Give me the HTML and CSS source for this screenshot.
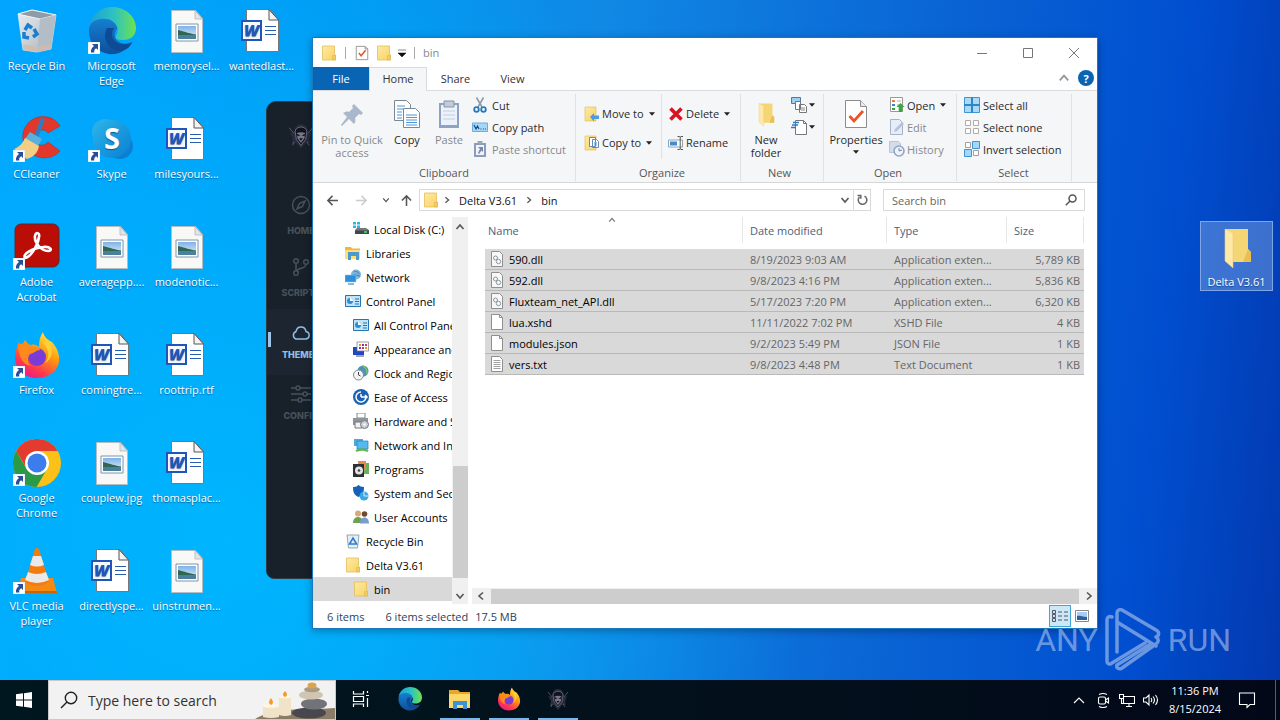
FILE: index.html
```html
<!DOCTYPE html>
<html lang="en">
<head>
<meta charset="utf-8">
<title>Desktop</title>
<link rel="stylesheet" href="styles.css">
</head>
<body>
<svg class="sprite" aria-hidden="true">
  <defs>
    <linearGradient id="gFold" x1="0" y1="0" x2="1" y2="1"><stop offset="0" stop-color="#ffeaa4"/><stop offset="1" stop-color="#f8d263"/></linearGradient>
    <linearGradient id="gEdge1" x1="0" y1="0" x2="1" y2="0"><stop offset="0" stop-color="#1aa0d8"/><stop offset=".55" stop-color="#2fc3c0"/><stop offset="1" stop-color="#6fe24b"/></linearGradient>
    <linearGradient id="gEdge2" x1="0" y1="0" x2="0" y2="1"><stop offset="0" stop-color="#1683d6"/><stop offset="1" stop-color="#0d4f9c"/></linearGradient>
    <linearGradient id="gSkype" x1="0" y1="0" x2="1" y2="1"><stop offset="0" stop-color="#2bb5ea"/><stop offset="1" stop-color="#0a7fd2"/></linearGradient>
    <linearGradient id="gFox" x1=".8" y1="0" x2=".2" y2="1"><stop offset="0" stop-color="#fff04a"/><stop offset=".4" stop-color="#ff980e"/><stop offset=".75" stop-color="#ff3750"/><stop offset="1" stop-color="#e3159a"/></linearGradient>
    <linearGradient id="gBin" x1="0" y1="0" x2="1" y2="1"><stop offset="0" stop-color="#e9eef2"/><stop offset="1" stop-color="#a9b3bc"/></linearGradient>
    <linearGradient id="gSky" x1="0" y1="0" x2="0" y2="1"><stop offset="0" stop-color="#7fb2e8"/><stop offset="1" stop-color="#e2f1f8"/></linearGradient>
  </defs>
  <symbol id="shortcut" viewBox="0 0 12 12"><path fill="#fff" stroke="#bcd" stroke-width=".5" d="M0 0h12v12H0z"/><path fill="#2a4f94" d="M4 2h6v6L8.200 6.200C6.500 7.300 6 8.500 6.300 10.500H3C2.500 7.500 4 5.500 6 4z"/></symbol>
  <symbol id="bin" viewBox="1 -1 48 48"><path d="M6 6 20 2l24 5-5 34-14 3-14-2z" fill="url(#gBin)" stroke="#e6ebef" stroke-width=".7"/><path d="M6 6 20 2l24 5-16 4z" fill="#8f9ba6" stroke="#fff" stroke-width=".8"/><path d="M28 11 25 44l14-3 5-34z" fill="#b4bdc5"/><path d="M11 36l14 3 15-3-1 5-14 3-14-2z" fill="#d8b9a4" opacity=".7"/><g fill="none" stroke="#1b7fd0" stroke-width="3.500"><path d="M13 22l3-5 4 3M22 21l3 5-4 3M17 30l-5-1 0-5"/></g></symbol>
  <symbol id="edge" viewBox="0 0 48 48"><path fill="url(#gEdge2)" d="M1 22C3 12 12 8 20 9c12 1 14 11 8 14-5 10 5 16 15 13-6 9-14 12-22 11C8 45 0 34 1 22z"/><path fill="#0f4a94" d="M19 21c-6 12 3 23 14 23 6-1 10-5 11-9-9 5-20 2-20-8 0-3 1-4 2-6z"/><path fill="url(#gEdge1)" d="M1 20C3 8 13 0 24 0c14 0 24 10 24 21 0 9-7 12-13 12-5 0-8-1-7-4 4-5 1-16-10-17C9 11 3 15 1 20z"/></symbol>
  <symbol id="pic" viewBox="0 0 48 48"><path d="M8.500 3.500h24l7 8v34h-31z" fill="#f8f8f6" stroke="#b5bcc2"/><path d="M32 3.500v8.500h7.500z" fill="#dce6ee" stroke="#b9a9a6" stroke-width=".7"/><path d="M13 17h22v17H13z" fill="#fff" stroke="#7c95ab"/><path d="M15 19h18v13H15z" fill="url(#gSky)"/><path d="M15 23c5 1 9 3 18 4.500v1.500H15z" fill="#2f6753"/><path d="M15 28h18v4H15z" fill="#4a7f9e"/></symbol>
  <symbol id="word" viewBox="0 0 48 48"><path d="M8.500 2.500h23l9 10v32h-32z" fill="#fff" stroke="#777"/><path d="M31 2.500V13h9.500z" fill="#f3f3f3" stroke="#555"/><path d="M27 19.500h11M27 23.500h11M27 27.500h11" stroke="#2a5cae"/><path d="M3 13h21v21H3z" fill="#1f56b8"/><path d="M5 15h17v17H5z" fill="#f4f8ff"/><text x="13.500" y="29" text-anchor="middle" font-family="Open Sans,sans-serif" font-size="16" font-weight="800" font-style="italic" fill="#1f56b8">W</text></symbol>
  <symbol id="cc" viewBox="0 0 48 48"><path d="M47 11C39-3 15-2 10 18c-3 20 22 34 37 18l-12-9c-7 7-13 1-12-5 1-8 9-9 12-4z" fill="#e2382b" stroke="#b92218" stroke-width=".5"/><path d="M28 3l4 1-7 19-4-2z" fill="#2c7fbf"/><path d="M17 17l12 7-4 7-13-7z" fill="#5ab0dd"/><path d="M1 34c5-2 9-6 11-11l14 8c-1 6-5 11-12 13z" fill="#f3cf86"/></symbol>
  <symbol id="skype" viewBox="0 0 48 48"><circle cx="17" cy="17" r="13" fill="#29aee6"/><circle cx="32" cy="31" r="13" fill="#0b80d3"/><circle cx="24" cy="24" r="19" fill="url(#gSkype)"/><text x="24" y="34" text-anchor="middle" font-family="Open Sans,sans-serif" font-size="29" font-weight="700" fill="#fff">S</text></symbol>
  <symbol id="acro" viewBox="0 0 48 48"><rect x="2" y="1" width="44" height="43" rx="6" fill="#b90d05" stroke="#5d2a2c"/><path d="M12 35c-3-4 8-10 18-11 8-1 10 4 5 4-7 0-14-9-13-15 1-5 5-3 4 1-1 8-8 20-14 21z" fill="none" stroke="#fff" stroke-width="2.600"/></symbol>
  <symbol id="fox" viewBox="0 0 48 48"><path d="M30 1c1 5 5 8 9 10 5 6 8 12 7 20-2 10-11 16-22 16C11 47 2 38 2 26c0-6 2-10 4-15l3 5c0-3 2-5 3-7 2 3 4 5 6 5 3-1 6 0 8 2 0-6 1-11 4-15z" fill="url(#gFox)"/><circle cx="24" cy="26" r="9" fill="#7b3bd6"/><path d="M5 14c6-3 11-1 14 2 5-1 8 1 8 3-4 0-5 3-10 4-3 4-3 9 1 12C8 33 6 24 5 14z" fill="#ff8a1c"/><path d="M30 12c6 5 7 14 2 20 8-4 10-16 2-22z" fill="#ffd43a" opacity=".8"/></symbol>
  <symbol id="chrome" viewBox="0 0 48 48"><circle cx="24" cy="24" r="24" fill="#fbc116"/><path d="M24 12h20.800a24 24 0 0 0-41.600 0L14 30z" fill="#e33b2e"/><path d="M3.200 12 13.600 30 24 36l10-6-10.400 18A24 24 0 0 1 3.200 12z" fill="#2a9a48"/><circle cx="24" cy="24" r="12" fill="#fff"/><circle cx="24" cy="24" r="9.500" fill="#3b7ded"/></symbol>
  <symbol id="vlc" viewBox="0 0 48 48"><path d="M8 31h32l4 15H4z" fill="#f58a12"/><path d="M4 44h40v2H4z" fill="#c96400"/><path d="M22 2q2-2 4 0l10 33q-12 8-24 0z" fill="#f47c0c"/><path d="M20 9h8l3 9q-7 3-14 0zM15 25q9 4 18 0l3 8q-12 6-24 0z" fill="#e9e9e9"/></symbol>
  <symbol id="bigfolder" viewBox="0 -3 48 48"><path d="M12 3h23v20l3 3v10H16z" fill="#f5d674"/><path d="M35 23l3 3v10h-8z" fill="#e9bf52"/><path d="M12 3l8 4v35l-8-7z" fill="#ffe9a8" stroke="#f0cb66" stroke-width=".6"/></symbol>
  <symbol id="folder" viewBox="0 0 16 16"><path d="M1.500 1h12v8l1 1v5h-13z" fill="url(#gFold)" stroke="#e4be5c" stroke-width=".8"/><path d="M11.500 10.500h3V15h-3z" fill="#f3cc5d" stroke="#dcb14a" stroke-width=".5"/></symbol>
  <symbol id="chk" viewBox="0 0 16 18"><path d="M1.500 1.500h10l3 3v12h-13z" fill="#fff" stroke="#8d8d8d"/><path d="M11.500 1.500v3h3" fill="none" stroke="#8d8d8d"/><path d="m4.500 9 2.500 3 5-6" fill="none" stroke="#e0592c" stroke-width="1.800"/></symbol>
  <symbol id="chkbig" viewBox="0 0 28 30"><path d="M3.500 1.500h15l6 6v21h-21z" fill="#fff" stroke="#8d8d8d"/><path d="M18.500 1.500v6h6" fill="#e6eaee" stroke="#8d8d8d"/><path d="m7.500 17 4.500 5 9-10" fill="none" stroke="#e8562a" stroke-width="2.800"/></symbol>
  <symbol id="pin" viewBox="0 0 28 28"><g fill="#a9b8cb"><path d="m16 4 9 9-2 2-2-1-4 4c1 3 0 5-1 6l-5-5-7 7-1-1 6-8-4-4c2-1 4-2 6-1l4-4-1-2z"/></g></symbol>
  <symbol id="copy" viewBox="0 0 28 30"><g fill="#fff" stroke="#7c8794"><path d="M1.500 1.500h12l4 4v16h-16z"/><path d="M10.500 9.500h12l4 4v15h-16z"/></g><path d="M4 7h8M4 10h6M4 13h5M4 16h5M4 19h5M13 16h11M13 18.500h11M13 21h11M13 23.500h11M13 26h11" stroke="#4d94dc"/></symbol>
  <symbol id="paste" viewBox="0 0 28 30"><path d="M4 4h20v25H4z" fill="#8ea2c4"/><path d="M6 6h16v20H6z" fill="#edf2fa"/><path d="M9 2h10v6H9z" fill="#c3cbd6" stroke="#8595ad"/><path d="M8 12h12M8 16h12M8 20h12" stroke="#c0cee2"/></symbol>
  <symbol id="cut" viewBox="0 0 16 16"><path d="M4.500.5 10 10M11.500.5 6 10" stroke="#8a98a8" stroke-width="1.500"/><g fill="none" stroke="#2a7ac0" stroke-width="1.800"><circle cx="4.500" cy="12.500" r="2.300"/><circle cx="11.500" cy="12.500" r="2.300"/></g></symbol>
  <symbol id="cpath" viewBox="0 0 16 16"><path d="M.5 4h15v8.500H.5z" fill="#a6d6f8" stroke="#6badde"/><path d="m2 6 2 4 1.500-3L7 10M8.500 10h1M11 10h1M13 10h1" fill="none" stroke="#164a7c" stroke-width="1.200"/></symbol>
  <symbol id="psc" viewBox="0 0 16 16"><path d="M2 2h12v14H2z" fill="#8e9cb9"/><path d="M4 4h8v10H4z" fill="#f0f3f9"/><path d="M5.500 0h5v3h-5z" fill="#9ba6b9"/><path d="M6 6h5v5L9.500 9.500 7 13 6 12l2-4z" fill="#7488ad"/></symbol>
  <symbol id="moveto" viewBox="0 0 16 16"><path d="M1 1h11v14H1z" fill="url(#gFold)" stroke="#e4c067" stroke-width=".7"/><path d="m6 11 4-4v2.500h5v3.500h-5v2.500z" fill="#4a9be8"/></symbol>
  <symbol id="copyto" viewBox="0 0 16 16"><path d="M1 1h11v14H1z" fill="url(#gFold)" stroke="#e4c067" stroke-width=".7"/><path d="M5.500 2.500h6v9h-6zM8.500 4.500h4l2 2v6h-6z" fill="#fff" stroke="#5f8bb8"/><path d="M10 8h3M10 10h3" stroke="#4d94dc"/></symbol>
  <symbol id="del" viewBox="0 0 16 16"><path d="m2.500 2.500 11 11m0-11-11 11" stroke="#d81123" stroke-width="3.600"/></symbol>
  <symbol id="ren" viewBox="0 0 16 16"><path d="M.5 5h14v7H.5z" fill="#fff" stroke="#90a4b5"/><path d="M2 6.500h7v4H2z" fill="#3d8dd0"/><path d="M9.500 1.500h2l.7.700.8-.7h2M12.200 2v12M9.500 14.500h2l.7-.7.800.7h2" fill="none" stroke="#555"/></symbol>
  <symbol id="newitem" viewBox="0 0 16 16"><path d="M.5.5h9v6h-9z" fill="#9bd0f2" stroke="#477da8"/><path d="M4.500 4.500h5v8h-5zM8.500 7.500h5l2 2v6h-7z" fill="#fff" stroke="#777"/><path d="M10 11h4M10 13h4" stroke="#888"/></symbol>
  <symbol id="easy" viewBox="0 0 16 16"><path d="M4.500 1.500h8l3 3v11h-11z" fill="#fff" stroke="#777"/><path d="M12.500 1.500v3h3" fill="none" stroke="#777"/><path d="M2 3.500h6M1 6h6M0 8.500h5" stroke="#2d7cc2" stroke-width="1.400"/></symbol>
  <symbol id="openi" viewBox="0 0 16 16"><path d="M1.500.5h12v14h-12z" fill="#fff" stroke="#999"/><path d="M3 3h3v2H3z" fill="#e67d3a"/><path d="M3 7h3v2H3z" fill="#3b86c9"/><path d="M3 11h3v2H3z" fill="#3aa34b"/><path d="M8 4h4M8 8h3" stroke="#aaa"/><path d="m11.500 6 4 4h-2.200v5h-3.600v-5H7.500z" fill="#37a93c"/></symbol>
  <symbol id="editi" viewBox="0 0 16 16"><path d="M1.500.5h9l3 3v12h-12z" fill="#e7edf7" stroke="#a5b4cc"/><path d="m5 13 1-3 7-7 2 2-7 7z" fill="#b6c3da"/></symbol>
  <symbol id="hist" viewBox="0 0 16 16"><path d="M.5.5h9l2 2v9H.5z" fill="#d4dcec" stroke="#b9c5da"/><circle cx="10" cy="10" r="5" fill="#eef2fa" stroke="#92a3c4" stroke-width="1.600"/><path d="M10 10V7M10 10l3-1" stroke="#7286b0"/></symbol>
  <symbol id="selall" viewBox="0 0 16 16"><path d="M.5.500h15v15H.5z" fill="#a9d9f7" stroke="#3f95cf"/><path d="M8 0v16M0 8h16" stroke="#2f86c4" stroke-width="2"/></symbol>
  <symbol id="selnone" viewBox="0 0 16 16"><path d="M1.500 1.500h5v5h-5zM9.500 1.500h5v5h-5zM1.500 9.500h5v5h-5zM9.500 9.500h5v5h-5z" fill="#fff" stroke="#b3aaa6"/></symbol>
  <symbol id="selinv" viewBox="0 0 16 16"><path d="M1.500 1.500h5v5h-5zM9.500 9.500h5v5h-5z" fill="#fff" stroke="#a59d9a"/><path d="M8.500.5h7v7h-7zM.5 8.500h7v7h-7z" fill="#a3d8fa" stroke="#3f95cf"/></symbol>
  <symbol id="disk" viewBox="0 0 16 16"><path d="M0 1h3v2.500H0zM4 1h3v2.500H4zM0 4.500h3V7H0zM4 4.500h3V7H4z" fill="#2cb6e6"/><path d="m2 9 2-2h9l3 2v4H2z" fill="#71787e"/><path d="M2 9.500h14V13H2z" fill="#3f464c"/><path d="M11 11h3" stroke="#5de06a" stroke-width="1.500"/></symbol>
  <symbol id="lib" viewBox="0 0 16 16"><path d="M0 2h6l1 1.500h8V14H0z" fill="#f2b63c"/><path d="M0 5h15v9H0z" fill="#ffdd78"/><path d="M3 15V7h11v8h-3v-4H6v4z" fill="#4a9ad0"/></symbol>
  <symbol id="net" viewBox="0 0 16 16"><circle cx="11" cy="5.500" r="5" fill="#7ab6dc"/><path d="M9 2c2 1 4 0 5 3M8 6c3-1 4 1 7 1" stroke="#3c7fb2" fill="none"/><path d="M0 6h11v7H0z" fill="#2b8fdc" stroke="#8cc9f2" stroke-width=".6"/><path d="M3 15h6" stroke="#6aa0c8" stroke-width="1.500"/></symbol>
  <symbol id="cpl" viewBox="0 0 16 16"><path d="M.5 2.500h15v11H.5z" fill="#bfe4fa" stroke="#2376b2"/><circle cx="5" cy="8" r="3" fill="#2a8fd6"/><path d="M5 8V5a3 3 0 0 1 3 3z" fill="#fff"/><path d="M10 6h4M10 8.500h4M10 11h4" stroke="#2376b2" stroke-width="1.200"/></symbol>
  <symbol id="appr" viewBox="0 0 16 16"><path d="M0 6h11v8H0z" fill="#2247c4"/><path d="M4 1h11.500v9H4z" fill="#fff" stroke="#777" stroke-width=".7"/><path d="M6 3h2v2H6zM12 6h2v2h-2z" fill="#f08a1e"/><path d="M9 3h2v2H9zM6 6h2v2H6z" fill="#6d3cb4"/><path d="M12 3h2v2h-2zM9 6h2v2H9z" fill="#d8315b"/><path d="M3 15h8" stroke="#889" stroke-width="1.500"/></symbol>
  <symbol id="clock" viewBox="0 0 16 16"><circle cx="10" cy="6" r="5.500" fill="#4b94b8"/><path d="M10 1c3 1 4 4 4 8" stroke="#83bd62" stroke-width="1.500" fill="none"/><circle cx="5.500" cy="10" r="5" fill="#f4f4f4" stroke="#808a92"/><path d="M5.500 7v3l2 1" stroke="#444" fill="none"/></symbol>
  <symbol id="ease" viewBox="0 0 16 16"><circle cx="8" cy="8" r="8" fill="#1a63b4"/><path d="M8 3a5 5 0 1 0 5 5M8 8h6m-2-2 2 2-2 2M8 8V5" fill="none" stroke="#fff" stroke-width="1.500"/></symbol>
  <symbol id="hw" viewBox="0 0 16 16"><path d="M4 0h8v5H4z" fill="#fff" stroke="#888"/><path d="M0 5h15v7H0z" fill="#8d949a"/><path d="M2 9h7v6H2z" fill="#f2f2f2" stroke="#777"/><circle cx="11.500" cy="11.500" r="4" fill="#c8ced3" stroke="#717a82"/><circle cx="11.500" cy="11.500" r="1.200" fill="#fff"/></symbol>
  <symbol id="neti" viewBox="0 0 16 16"><path d="M1 2h9v7H1z" fill="#49acdf"/><path d="M4 4h11v8H4z" fill="#54b9ee" stroke="#2281b8" stroke-width=".7"/><path d="M3 14c4-2 8-2 12 0" stroke="#62b34c" stroke-width="2.500" fill="none"/></symbol>
  <symbol id="prog" viewBox="0 0 16 16"><path d="M9 2h7v11H9z" fill="#6fae5b"/><path d="M5 0h8v9H5z" fill="#e8894e"/><path d="M0 3h11v13H0z" fill="#2c3034"/><circle cx="6" cy="9.500" r="4" fill="#e4e4e4"/><circle cx="6" cy="9.500" r="1.300" fill="#444"/></symbol>
  <symbol id="sec" viewBox="0 0 16 16"><path d="M0 2c4 0 4-1 5.500-2C7 1 8 2 11 2c0 5-1 8-5.500 10C1 10 0 7 0 2z" fill="#1561b8"/><circle cx="11" cy="11" r="4.500" fill="#38a9e4"/><path d="M11 6.500V11h4.500" fill="none" stroke="#d3effc"/></symbol>
  <symbol id="users" viewBox="0 0 16 16"><circle cx="5" cy="4.500" r="3" fill="#d9aa74"/><path d="M0 14c0-8 10-8 10 0z" fill="#6da050"/><circle cx="11.500" cy="5" r="2.800" fill="#6e4a35"/><path d="M7 14.500c0-8 9-8 9 0z" fill="#7b9ccc"/></symbol>
  <symbol id="sbin" viewBox="0 0 16 16"><path d="M2 2h12l-1.500 13h-9z" fill="#e6eef4" stroke="#93a5b3"/><path d="m8 5 3.500 6h-7z" fill="none" stroke="#2a7fd0" stroke-width="1.600"/></symbol>
  <symbol id="dll" viewBox="0 0 16 16"><path d="M2.500.5h8l3 3v12h-11z" fill="#f7f7f7" stroke="#8f8f8f"/><g fill="none" stroke="#8b98a3"><circle cx="6.500" cy="7" r="2"/><circle cx="9.500" cy="10.500" r="2.200"/></g></symbol>
  <symbol id="blank" viewBox="0 0 16 16"><path d="M2.500.5h8l3 3v12h-11z" fill="#fff" stroke="#8f8f8f"/><path d="M10.500.5v3h3" fill="none" stroke="#8f8f8f"/></symbol>
  <symbol id="txt" viewBox="0 0 16 16"><path d="M2.500.5h8l3 3v12h-11z" fill="#fff" stroke="#8f8f8f"/><path d="M4.500 4.500h7M4.500 6.500h7M4.500 8.500h7M4.500 10.500h7M4.500 12.500h7" stroke="#a0a0a0"/></symbol>
  <symbol id="caret" viewBox="0 0 7 4"><path d="M0 0h7L3.500 4z" fill="#222"/></symbol>
  <symbol id="chev" viewBox="0 0 10 10"><path d="m1.500 3 3.500 4 3.500-4" fill="none" stroke="currentColor" stroke-width="1.600"/></symbol>
  <symbol id="arrow" viewBox="0 0 14 12"><path d="M13 6H2m5-5L2 6l5 5" fill="none" stroke="currentColor" stroke-width="1.700"/></symbol>
  <symbol id="explorer" viewBox="0 0 24 24"><path d="M1 3h9l2 2h10v15H1z" fill="#e8a72a"/><path d="M1 7h21v14H1z" fill="#ffd766"/><path d="M5 22v-8h14v8h-4v-4H9v4z" fill="#3c92d6"/></symbol>
  <symbol id="hood" viewBox="0 0 24 24"><path d="M12 2c4 0 6 3 6 8l3-1-2 6 1 3-4 0-4 5-4-5-4 1 1-5-3-5 4 1c0-5 2-8 6-8z" fill="#2a2b3c"/><path d="M7 8c1-5 9-5 10 0l-1 7-4 5-4-5z" fill="#12131c" stroke="#6f7088" stroke-width=".8"/><path d="M8.500 9.500c2-1 5-1 7 0L15 14l-3 4-3-4z" fill="#77778a"/><path d="m8.500 10 3 1.500-2.500.5zM15.500 10l-3 1.500 2.500.5zM10.500 14h3L12 16z" fill="#0a0a10"/><path d="m2 5 4 5M22 5l-4 5M6 17l-1 3M17 17l2 3" fill="none" stroke="#5c5d72" stroke-width=".8"/></symbol>
</svg>

<main class="desktop">
  <div class="icons">
    <a class="ico" href="#"><svg><use href="#bin"/></svg><span>Recycle Bin</span></a>
    <a class="ico lnk" href="#"><svg><use href="#cc"/></svg><svg class="sc"><use href="#shortcut"/></svg><span>CCleaner</span></a>
    <a class="ico lnk" href="#"><svg><use href="#acro"/></svg><svg class="sc"><use href="#shortcut"/></svg><span>Adobe Acrobat</span></a>
    <a class="ico lnk" href="#"><svg><use href="#fox"/></svg><svg class="sc"><use href="#shortcut"/></svg><span>Firefox</span></a>
    <a class="ico lnk" href="#"><svg><use href="#chrome"/></svg><svg class="sc"><use href="#shortcut"/></svg><span>Google Chrome</span></a>
    <a class="ico lnk" href="#"><svg><use href="#vlc"/></svg><svg class="sc"><use href="#shortcut"/></svg><span>VLC media player</span></a>
    <a class="ico lnk" href="#"><svg><use href="#edge"/></svg><svg class="sc"><use href="#shortcut"/></svg><span>Microsoft Edge</span></a>
    <a class="ico lnk" href="#"><svg><use href="#skype"/></svg><svg class="sc"><use href="#shortcut"/></svg><span>Skype</span></a>
    <a class="ico" href="#"><svg><use href="#pic"/></svg><span>averagepp....</span></a>
    <a class="ico" href="#"><svg><use href="#word"/></svg><span>comingtre...</span></a>
    <a class="ico" href="#"><svg><use href="#pic"/></svg><span>couplew.jpg</span></a>
    <a class="ico" href="#"><svg><use href="#word"/></svg><span>directlyspe...</span></a>
    <a class="ico" href="#"><svg><use href="#pic"/></svg><span>memorysel...</span></a>
    <a class="ico" href="#"><svg><use href="#word"/></svg><span>milesyours...</span></a>
    <a class="ico" href="#"><svg><use href="#pic"/></svg><span>modenotic...</span></a>
    <a class="ico" href="#"><svg><use href="#word"/></svg><span>roottrip.rtf</span></a>
    <a class="ico" href="#"><svg><use href="#word"/></svg><span>thomasplac...</span></a>
    <a class="ico" href="#"><svg><use href="#pic"/></svg><span>uinstrumen...</span></a>
    <a class="ico" href="#"><svg><use href="#word"/></svg><span>wantedlast...</span></a>
  </div>
  <a class="ico picked" href="#"><svg><use href="#bigfolder"/></svg><span>Delta V3.61</span></a>

  <aside class="app">
    <svg class="app-logo"><use href="#hood"/></svg>
    <nav class="app-nav">
      <a href="#"><svg viewBox="0 0 20 20"><circle cx="10" cy="10" r="8.500"/><path d="m14 6-2.500 5.500L6 14l2.500-5.500z"/></svg>HOME</a>
      <a href="#"><svg viewBox="0 0 20 20"><circle cx="5" cy="4" r="2.300"/><circle cx="5" cy="16" r="2.300"/><circle cx="15" cy="5" r="2.300"/><path d="M5 6.300v7.400M15 7.300c0 5-8 3-9 6.500"/></svg>SCRIPTS</a>
      <a class="on" href="#"><svg viewBox="0 0 20 20"><path d="M5 16a4 4 0 0 1 0-7.500c1-6 9-6 10 0a3.800 3.800 0 0 1 0 7.500z"/></svg>THEMES</a>
      <a href="#"><svg viewBox="0 0 20 20"><path d="M0 4h5m4 0h11M0 10h12m4 0h4M0 16h7m4 0h9"/><circle cx="7" cy="4" r="2"/><circle cx="14" cy="10" r="2"/><circle cx="9" cy="16" r="2"/></svg>CONFIG</a>
    </nav>
  </aside>

  <section class="win">
    <header class="title">
      <svg class="i16"><use href="#folder"/></svg><i class="vl"></i>
      <svg class="i16"><use href="#chk"/></svg><svg class="i16"><use href="#folder"/></svg>
      <svg class="qat" viewBox="0 0 8 8"><path d="M0 1h8M0 4h8L4 8z" fill="#111" stroke="#111" stroke-width=".5"/></svg><i class="vl"></i>
      <span class="name">bin</span>
      <button aria-label="Minimize"><svg viewBox="0 0 10 10"><path d="M0 5.500h10"/></svg></button>
      <button aria-label="Maximize"><svg viewBox="0 0 10 10"><path d="M.5.5h9v9h-9z"/></svg></button>
      <button aria-label="Close"><svg viewBox="0 0 10 10"><path d="m0 0 10 10M10 0 0 10"/></svg></button>
    </header>
    <div class="tabs">
      <button class="file">File</button><button class="cur">Home</button><button>Share</button><button>View</button>
      <svg class="fold up"><use href="#chev"/></svg>
      <button class="help" aria-label="Help">?</button>
    </div>
    <div class="ribbon">
      <div class="grp clip"><div class="body">
        <button class="big dis pinb"><svg><use href="#pin"/></svg>Pin to Quick access</button>
        <button class="big"><svg><use href="#copy"/></svg>Copy</button>
        <button class="big dis"><svg><use href="#paste"/></svg>Paste</button>
        <div class="col last"><button><svg class="i16"><use href="#cut"/></svg>Cut</button><button><svg class="i16"><use href="#cpath"/></svg>Copy path</button><button class="dis"><svg class="i16"><use href="#psc"/></svg>Paste shortcut</button></div>
      </div><p>Clipboard</p></div>
      <div class="grp org"><div class="body">
        <div class="col two"><button><svg class="i16"><use href="#moveto"/></svg>Move to<svg class="car"><use href="#caret"/></svg></button><button><svg class="i16"><use href="#copyto"/></svg>Copy to<svg class="car"><use href="#caret"/></svg></button></div>
        <div class="col two line"><button><svg class="i16"><use href="#del"/></svg>Delete<svg class="car"><use href="#caret"/></svg></button><button><svg class="i16"><use href="#ren"/></svg>Rename</button></div>
      </div><p>Organize</p></div>
      <div class="grp new"><div class="body">
        <button class="big"><svg><use href="#bigfolder"/></svg>New folder</button>
        <div class="col"><button aria-label="New item"><svg class="i16"><use href="#newitem"/></svg><svg class="car"><use href="#caret"/></svg></button><button aria-label="Easy access"><svg class="i16"><use href="#easy"/></svg><svg class="car"><use href="#caret"/></svg></button></div>
      </div><p>New</p></div>
      <div class="grp open"><div class="body">
        <button class="big prop"><svg><use href="#chkbig"/></svg>Properties<svg class="car"><use href="#caret"/></svg></button>
        <div class="col"><button><svg class="i16"><use href="#openi"/></svg>Open<svg class="car"><use href="#caret"/></svg></button><button class="dis"><svg class="i16"><use href="#editi"/></svg>Edit</button><button class="dis"><svg class="i16"><use href="#hist"/></svg>History</button></div>
      </div><p>Open</p></div>
      <div class="grp sel"><div class="body">
        <div class="col"><button><svg class="i16"><use href="#selall"/></svg>Select all</button><button><svg class="i16"><use href="#selnone"/></svg>Select none</button><button><svg class="i16"><use href="#selinv"/></svg>Invert selection</button></div>
      </div><p>Select</p></div>
    </div>
    <div class="addr">
      <button aria-label="Back"><svg class="arr"><use href="#arrow"/></svg></button>
      <button class="off" aria-label="Forward"><svg class="arr flip"><use href="#arrow"/></svg></button>
      <button class="slim" aria-label="Recent"><svg class="c8"><use href="#chev"/></svg></button>
      <button class="slim" aria-label="Up"><svg class="arr upa"><use href="#arrow"/></svg></button>
      <div class="path"><svg class="i16"><use href="#folder"/></svg><svg class="c8 right"><use href="#chev"/></svg><button>Delta V3.61</button><svg class="c8 right"><use href="#chev"/></svg><button>bin</button>
        <button class="drop" aria-label="Previous locations"><svg class="c10"><use href="#chev"/></svg></button>
        <button class="ref" aria-label="Refresh"><svg viewBox="0 0 12 12"><path d="M8.500 2.200A4.300 4.300 0 1 1 3.500 3M1.500 1.500h3.300v3.300" fill="none" stroke="#666" stroke-width="1.500"/></svg></button>
      </div>
      <label class="find"><input type="search" placeholder="Search bin" aria-label="Search bin"><svg viewBox="0 0 12 12"><circle cx="7.500" cy="4.500" r="3.500"/><path d="M5 7 .8 11.200"/></svg></label>
    </div>
    <div class="main">
      <nav class="tree">
        <a class="sub" href="#"><svg class="i16"><use href="#disk"/></svg>Local Disk (C:)</a>
        <a href="#"><svg class="i16"><use href="#lib"/></svg>Libraries</a>
        <a href="#"><svg class="i16"><use href="#net"/></svg>Network</a>
        <a href="#"><svg class="i16"><use href="#cpl"/></svg>Control Panel</a>
        <a class="sub" href="#"><svg class="i16"><use href="#cpl"/></svg>All Control Panel Items</a>
        <a class="sub" href="#"><svg class="i16"><use href="#appr"/></svg>Appearance and Personalization</a>
        <a class="sub" href="#"><svg class="i16"><use href="#clock"/></svg>Clock and Region</a>
        <a class="sub" href="#"><svg class="i16"><use href="#ease"/></svg>Ease of Access</a>
        <a class="sub" href="#"><svg class="i16"><use href="#hw"/></svg>Hardware and Sound</a>
        <a class="sub" href="#"><svg class="i16"><use href="#neti"/></svg>Network and Internet</a>
        <a class="sub" href="#"><svg class="i16"><use href="#prog"/></svg>Programs</a>
        <a class="sub" href="#"><svg class="i16"><use href="#sec"/></svg>System and Security</a>
        <a class="sub" href="#"><svg class="i16"><use href="#users"/></svg>User Accounts</a>
        <a href="#"><svg class="i16"><use href="#sbin"/></svg>Recycle Bin</a>
        <a href="#"><svg class="i16"><use href="#folder"/></svg>Delta V3.61</a>
        <a class="sub here" href="#"><svg class="i16"><use href="#folder"/></svg>bin</a>
      </nav>
      <div class="vbar"><svg class="c10 up"><use href="#chev"/></svg><i></i><svg class="c10"><use href="#chev"/></svg></div>
      <div class="pane">
        <svg class="sort up"><use href="#chev"/></svg>
        <table>
          <colgroup><col><col class="w-date"><col class="w-type"><col class="w-size"></colgroup>
          <thead><tr><th>Name</th><th>Date modified</th><th>Type</th><th>Size</th></tr></thead>
          <tbody>
            <tr><td><svg class="i16"><use href="#dll"/></svg>590.dll</td><td>8/19/2023 9:03 AM</td><td>Application exten...</td><td>5,789 KB</td></tr>
            <tr><td><svg class="i16"><use href="#dll"/></svg>592.dll</td><td>9/8/2023 4:16 PM</td><td>Application exten...</td><td>5,836 KB</td></tr>
            <tr><td><svg class="i16"><use href="#dll"/></svg>Fluxteam_net_API.dll</td><td>5/17/2023 7:20 PM</td><td>Application exten...</td><td>6,320 KB</td></tr>
            <tr><td><svg class="i16"><use href="#blank"/></svg>lua.xshd</td><td>11/11/2022 7:02 PM</td><td>XSHD File</td><td>4 KB</td></tr>
            <tr><td><svg class="i16"><use href="#blank"/></svg>modules.json</td><td>9/2/2023 5:49 PM</td><td>JSON File</td><td>1 KB</td></tr>
            <tr><td><svg class="i16"><use href="#txt"/></svg>vers.txt</td><td>9/8/2023 4:48 PM</td><td>Text Document</td><td>1 KB</td></tr>
          </tbody>
        </table>
        <div class="hbar"><svg class="c10 left"><use href="#chev"/></svg><i></i><svg class="c10 right"><use href="#chev"/></svg></div>
      </div>
    </div>
    <footer class="status"><span class="n">6 items</span><span>6 items selected</span><span class="mb">17.5 MB</span>
      <button class="vw act" aria-label="Details view"><svg viewBox="0 0 18 14"><path d="M1.500 1.500h3v3h-3zM1.500 5.500h3v3h-3zM1.500 9.500h3v3h-3zM7 3h4M7 7h4M7 11h4M13 3h4M13 7h4M13 11h4" fill="none" stroke="#556"/></svg></button>
      <button class="vw" aria-label="Large icons view"><svg viewBox="0 0 18 14"><path d="M2.500 1.500h13v11h-13z" fill="#fff" stroke="#888"/><path d="M4 3h10v8H4z" fill="#a8cdf0"/><path d="M4 7c4-1 6 1 10 1v3H4z" fill="#2d609e"/></svg></button>
    </footer>
  </section>

  <div class="mark"><span>ANY</span>
    <svg viewBox="0 0 56 64"><path d="M7 9C4 8 2 9 2 12v41c0 3 3 4 5 2l33-20M12 44V5c0-3 3-4 5-3l34 20c4 2 3 6 0 7M12 14l39 24M51 29c3 2 3 5 0 7L17 60c-3 2-6 0-5-3L44 37"/></svg>
    <span>RUN</span></div>
</main>

<footer class="bar">
  <button class="start" aria-label="Start"><svg viewBox="0 0 16 16"><path fill="#fff" d="m0 2.300 7-1v6.200H0zM8 1.200 16 0v7.500H8zM0 8.500h7v6.200l-7-1zM8 8.500h8V16l-8-1.200z"/></svg></button>
  <label class="search"><svg viewBox="0 0 18 18"><circle cx="11" cy="7" r="5.700"/><path d="M7 11 1 17"/></svg><input type="text" placeholder="Type here to search" aria-label="Type here to search">
    <svg class="art" viewBox="0 0 80 38"><path d="M0 38c8-5 30-11 48-9l32-2v11z" fill="#8a7d68"/><path d="M8 25h16v11q-8 2-16 0zM24 16h12v18q-6 2-12 0z" fill="#f1e3c8"/><ellipse cx="16" cy="25" rx="8" ry="1.800" fill="#fdf6e2"/><ellipse cx="30" cy="16" rx="6" ry="1.500" fill="#fdf6e2"/><path d="M16 17q4 5 0 7-4-2 0-7zM30 10q4 4 0 6-4-2 0-6z" fill="#f49a25"/><ellipse cx="54" cy="32" rx="17" ry="5.500" fill="#47474d"/><ellipse cx="59" cy="23" rx="13" ry="5.500" fill="#727279"/><ellipse cx="56" cy="14" rx="12" ry="4.500" fill="#cfc5b2"/><ellipse cx="57" cy="8.500" rx="8" ry="2.800" fill="#a99a80"/><ellipse cx="57" cy="4.500" rx="4.500" ry="3" fill="#dba44d"/></svg></label>
  <button class="tb" aria-label="Task view"><svg class="tv" viewBox="0 0 18 18"><path d="M1.500 1v3h10V1M1.500 17v-3h10v3M1.500 6.500h10v5h-10zM15.500 1v2M15.500 8v9M14 5.500h3" fill="none" stroke="#fff" stroke-width="1.200"/></svg></button>
  <button class="tb" aria-label="Edge"><svg><use href="#edge"/></svg></button>
  <button class="tb run" aria-label="File Explorer"><svg><use href="#explorer"/></svg></button>
  <button class="tb run" aria-label="Firefox"><svg><use href="#fox"/></svg></button>
  <button class="tb run" aria-label="Delta"><svg><use href="#hood"/></svg></button>
  <div class="tray">
    <svg viewBox="0 0 16 16"><path d="m3 11 5-5 5 5"/></svg>
    <svg viewBox="0 0 16 16"><rect x="3.500" y="5" width="7" height="7" rx="1.500"/><path d="m10.500 8 3-2v5l-3-2M4 2.500c3-1.500 5-1.500 8 0M4 14.500c3 1.500 5 1.500 8 0"/></svg>
    <svg viewBox="0 0 16 16"><path d="M4.500 4.500h11v7h-11zM10 11.500v3M7 14.500h6M.5 2.500h4v4h-4zM2.500 6.500v5h2"/></svg>
    <svg viewBox="0 0 16 16"><path d="M.5 6v4H3l3 3V3L3 6zM8 6q1.500 2 0 4M10 4.500q3 3.500 0 7M12.500 3q4 5 0 10"/></svg>
    <div class="time"><span>11:36 PM</span><span>8/15/2024</span></div>
    <svg class="note" viewBox="0 0 18 18"><path d="M1.500 2h15v11.500H12l-3 3v-3H1.500z"/></svg>
    <i></i>
  </div>
</footer>
</body>
</html>
```
FILE: styles.css
```css
* { box-sizing: border-box; }
body {
  margin: 0; min-height: 100vh; display: flex; flex-direction: column; overflow: hidden;
  font: 11px/13px "Open Sans", "Noto Sans", sans-serif; color: #000;
  background:
    radial-gradient(ellipse 45% 90% at 18% 75%, rgba(0, 184, 255, .9), rgba(0, 184, 255, 0)),
    linear-gradient(96deg, #00a4ff 0%, #009af4 26%, #1088e4 45%, #0a64d4 70%, #004fd0 88%, #0338ae 100%);
}
button { font: inherit; color: inherit; background: none; border: 0; padding: 0; margin: 0; white-space: nowrap; }
a { color: inherit; text-decoration: none; }
input { font: inherit; border: 0; background: none; padding: 0; min-width: 0; outline: 0; }
svg { flex: none; display: block; }
.sprite { position: absolute; width: 0; height: 0; }
.i16 { width: 16px; height: 16px; }
.c8 { width: 8px; height: 8px; color: #555; }
.c10 { width: 10px; height: 10px; color: #555; }
.up { transform: rotate(180deg); }
.right { transform: rotate(-90deg); }
.left { transform: rotate(90deg); }
.car { width: 6px; height: 4px; }

.desktop { flex: 1; position: relative; }
.icons { display: grid; grid-template-rows: repeat(6, 108px); grid-auto-flow: column; grid-auto-columns: 75px; }
.ico { position: relative; display: flex; flex-direction: column; align-items: center; gap: 3px; padding-top: 7px; width: 73px; text-align: center; line-height: 15px; color: #fff; text-shadow: 0 1px 1px rgba(0, 40, 90, .6); }
.ico svg { width: 48px; height: 48px; }
.ico span { width: min-content; min-width: 60px; }
.ico .sc { position: absolute; left: 13px; top: 42px; width: 12px; height: 12px; }
.picked { position: absolute; right: 7px; top: 221px; padding: 1px 0; background: rgba(120, 160, 225, .5); border: 1px solid #7ea6e6; }
.picked span { width: auto; white-space: nowrap; }

.app { position: absolute; left: 266px; top: 101px; bottom: 101px; width: 70px; background: #18202a; border-radius: 10px 0 0 8px; border: 1px solid #303a45; overflow: hidden; color: #46515b; font: 800 9px/12px Inter, sans-serif; }
.app-logo { width: 28px; height: 28px; margin: 20px 0 0 20px; }
.app-nav { display: flex; flex-direction: column; margin-top: 35px; }
.app-nav a { height: 62px; display: flex; flex-direction: column; align-items: center; justify-content: center; gap: 10px; }
.app-nav .on { position: relative; height: 66px; gap: 6px; color: #8fc0ea; background: #1d2630; }
.app-nav .on::before { content: ""; position: absolute; left: 1px; top: 23px; width: 3px; height: 15px; background: #9fc6e8; }
.app-nav .on + a { height: 56px; gap: 6px; }
.app-nav svg { width: 20px; height: 20px; fill: none; stroke: currentColor; stroke-width: 1.500; }

.win { position: absolute; left: 312px; right: 182px; top: 37px; bottom: 51px; background: #fff; border: 1px solid #1a78c0; display: flex; flex-direction: column; box-shadow: 0 2px 8px rgba(0, 0, 0, .3); }
.title { height: 29px; display: flex; align-items: center; padding-left: 8px; gap: 6px; color: #888; }
.vl { width: 1px; height: 12px; background: #aaa; margin: 0 2px; }
.title .qat { width: 8px; height: 8px; }
.name { flex: 1; }
.title button { width: 46px; height: 26px; display: grid; place-items: center; margin-left: -6px; }
.title button svg { width: 10px; height: 10px; fill: none; stroke: #777; }
.tabs { height: 24px; display: flex; align-items: stretch; border-bottom: 1px solid #dadbdc; color: #333; }
.tabs button { width: 57px; }
.tabs .file { width: 56px; background: #0a64b4; color: #fff; }
.tabs .cur { width: 58px; background: #f5f6f7; border: 1px solid #dadbdc; border-width: 1px 1px 0; margin-bottom: -1px; padding-bottom: 2px; }
.fold { width: 12px; height: 12px; color: #999; margin: 5px 8px 0 auto; }
.tabs .help { width: 16px; height: 16px; margin: 3px 3px 0 0; border-radius: 50%; background: #0a64b4; color: #fff; font-weight: 700; }
.ribbon { height: 92px; display: flex; background: #f5f6f7; border-bottom: 1px solid #d5d6d7; color: #2b2b2b; padding: 3px 0 1px; }
.grp { display: flex; flex-direction: column; border-right: 1px solid #e0e1e2; }
.grp p { margin: 0; padding-bottom: 1px; text-align: center; color: #555; line-height: 15px; }
.body { flex: 1; display: flex; }
.clip { width: 263px; padding-left: 5px; }
.org { width: 165px; padding-left: 8px; }
.new { width: 83px; padding-left: 3px; }
.open { width: 133px; padding-left: 4px; }
.sel { width: 115px; padding-left: 7px; }
.clip p { padding-right: 5px; }
.open p, .sel p, .new p { padding-right: 8px; }
.big { display: flex; flex-direction: column; align-items: center; width: 42px; padding-top: 5px; white-space: normal; }
.big svg { width: 28px; height: 30px; margin-bottom: 4px; }
.big .car { width: 6px; height: 4px; margin: 4px 0 0; }
.pinb { width: 68px; }
.new .big { width: 44px; margin-right: 3px; }
.prop { width: 56px; margin-right: 5px; }
.dis { color: #85898f; }
.col button { height: 22px; display: flex; align-items: center; gap: 4px; }
.sel .col button { gap: 3px; }
.col.last { margin-left: 2px; }
.col.two { padding-top: 5px; width: 77px; }
.col.two button { height: 29px; gap: 2px; }
.col.two .car, .open .col .car { margin-left: 3px; }
.col.line { border-left: 1px solid #e0e1e2; padding-left: 6px; width: auto; margin-bottom: 6px; }
.new .col button, .open .col button { gap: 2px; }

.addr { height: 34px; display: flex; align-items: center; padding: 0 12px 0 5px; color: #555; }
.addr > button { width: 29px; display: grid; place-items: center; }
.addr > .slim { width: 20px; }
.arr { width: 13px; height: 11px; }
.flip { transform: rotate(180deg); }
.upa { transform: rotate(90deg); }
.off { color: #ccc; }
.path { flex: 1; height: 22px; margin-left: 3px; border: 1px solid #d9d9d9; display: flex; align-items: center; gap: 8px; padding-left: 3px; color: #111; }
.path .i16 { margin-right: -4px; }
.path .drop { margin-left: auto; }
.path .drop, .path .ref { display: grid; place-items: center; align-self: stretch; }
.path .drop { margin-right: -8px; width: 16px; }
.path .ref { width: 17px; border-left: 1px solid #d9d9d9; }
.ref svg { width: 12px; height: 12px; }
.find { width: 202px; height: 22px; margin-left: 12px; border: 1px solid #d9d9d9; display: flex; align-items: center; padding: 0 7px 0 8px; }
.find input { flex: 1; }
.find input::placeholder { color: #666; }
.find svg { width: 12px; height: 12px; fill: none; stroke: #555; stroke-width: 1.500; }

.main { flex: 1; display: flex; min-height: 0; }
.tree { width: 139px; overflow: hidden; }
.tree a { display: flex; align-items: center; height: 24px; padding-left: 32px; gap: 5px; white-space: nowrap; }
.tree .sub { padding-left: 40px; }
.tree .here { background: #d9d9d9; }
.vbar { width: 16px; background: #f0f0f0; display: flex; flex-direction: column; align-items: center; padding: 5px 0 3px; }
.vbar i { width: 15px; height: 112px; margin: auto 0 13px; background: #cdcdcd; }
.pane { flex: 1; min-width: 0; display: flex; flex-direction: column; padding-left: 4px; position: relative; }
.sort { position: absolute; left: 139px; top: -1px; width: 10px; height: 8px; color: #777; }
table { margin: 0 13px; border-spacing: 0; table-layout: fixed; color: #666; }
.w-date { width: 144px; } .w-type { width: 120px; } .w-size { width: 77px; }
th { height: 26px; padding: 0 7px; text-align: left; font-weight: 400; color: #4c607a; border-right: 1px solid #e6e6e6; }
th:first-child { padding-left: 3px; }
thead::after { content: ""; display: block; height: 6px; }
td { height: 21px; padding: 0 7px; background: #d9d9d9; border-bottom: 1px solid #b9b9b9; white-space: nowrap; }
td:first-child { color: #000; display: flex; align-items: center; gap: 4px; padding-left: 4px; }
td:last-child { text-align: right; padding-right: 4px; }
.hbar { margin-top: auto; height: 16px; background: #f0f0f0; display: flex; align-items: center; padding: 0 3px 0 4px; gap: 5px; }
.hbar i { flex: 1; height: 15px; background: #cdcdcd; }
.status { height: 24px; display: flex; align-items: center; padding: 0 4px 0 14px; color: #2c3e5c; }
.status .n { margin-right: 21px; }
.status .mb { margin: 0 auto 0 7px; }
.vw { width: 22px; height: 22px; display: grid; place-items: center; }
.vw svg { width: 18px; height: 14px; }
.act { background: #cce8f6; border: 1px solid #3fa5d8; }

.mark { position: absolute; right: 49px; bottom: 8px; display: flex; align-items: center; gap: 7px; color: rgba(165, 190, 235, .65); font: 32px/60px Roboto, sans-serif; }
.mark svg { width: 56px; height: 64px; fill: none; stroke: currentColor; stroke-width: 3.500; stroke-linejoin: round; stroke-linecap: round; }

.bar { height: 40px; display: flex; background: linear-gradient(90deg, #00171f, #03101c 60%, #020818); color: #fff; position: relative; }
.start { width: 48px; display: grid; place-items: center; }
.start svg { width: 16px; height: 16px; }
.search { width: 288px; background: #f2f2f2; border: 1px solid #c9c9c9; display: flex; align-items: center; padding-left: 11px; gap: 10px; }
.search svg { width: 18px; height: 18px; fill: none; stroke: #222; stroke-width: 1.400; }
.search input { flex: 1; font-size: 14px; }
.search input::placeholder { color: #333; }
.search .art { width: 80px; height: 38px; stroke: none; }
.tb { width: 49px; display: grid; place-items: center; border-bottom: 2px solid transparent; }
.tb svg { width: 24px; height: 24px; }
.tb .tv { width: 18px; height: 18px; }
.run { width: 40px; margin: 0 3px 0 6px; border-color: #76b9ed; }
.tray { margin-left: auto; display: flex; align-items: center; gap: 8px; }
.tray svg { width: 16px; height: 16px; fill: none; stroke: #fff; stroke-width: 1.100; }
.time { width: 56px; display: flex; flex-direction: column; text-align: center; line-height: 18px; }
.tray .note { width: 18px; height: 18px; margin: 0 11px 0 7px; }
.tray i { width: 1px; height: 40px; background: #54606c; margin-right: 4px; }
```
